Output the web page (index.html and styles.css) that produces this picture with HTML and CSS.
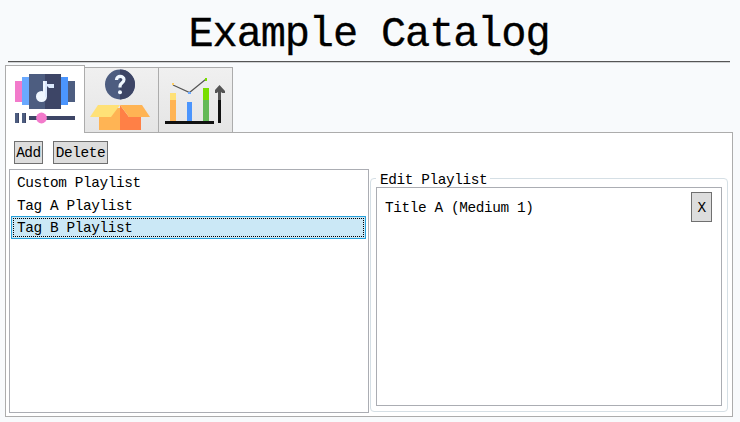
FILE: index.html
```html
<!DOCTYPE html>
<html lang="en">
<head>
<meta charset="utf-8">
<title>Example Catalog</title>
<link rel="stylesheet" href="styles.css">
</head>
<body>
<div class="window">
  <h1 class="title">Example Catalog</h1>
  <nav class="tabs">
    <div class="tab active">
      <svg width="60" height="50" viewBox="15 74 60 50" shape-rendering="crispEdges">
        <path fill="#f27acb" d="M15 81h7v21h-7z"/>
        <path fill="#6aa9ff" d="M22 77h7v28h-7z"/>
        <path fill="#4b95fd" d="M61 77h7v28h-7z"/>
        <path fill="#4d5d80" d="M68 81h7v21h-7zM29 74h16v35H29z"/>
        <path fill="#3d4566" d="M45 74h16v35H45z"/>
        <g shape-rendering="auto"><circle cx="41.5" cy="96.5" r="5.5" fill="#f0f7ff"/><path fill="#f0f7ff" d="M43 81h4v16h-4z"/><path fill="#dce9fd" d="M45 81h2v3h7v4h-5l-2-2v11h-2z"/></g>
        <path fill="#4d5d80" d="M15 113h3v10h-3zM22 113h3v10h-3z"/>
        <path fill="#3d4566" d="M18 113h1v10h-1zM25 113h1v10h-1zM29 116h46v4H29z"/>
        <circle cx="41.5" cy="118" r="5.4" fill="#f27acb" shape-rendering="auto"/>
      </svg>
    </div>
    <div class="tab">
      <svg width="62" height="62" viewBox="89 69 62 62">
        <circle cx="120" cy="84.500" r="15" fill="#4d5d80"/>
        <path fill="#3d4566" d="M120 69.500a15 15 0 0 1 0 30z"/>
        <path fill="none" stroke="#f0f7ff" stroke-width="3.200" d="M116.500 80c0-5 7.500-4.500 7.500-.5 0 3.500-4 3-4 7v1"/>
        <circle cx="120" cy="92.200" r="2" fill="#f0f7ff"/>
        <path fill="#ffb454" d="M99 108h21v22H99z"/>
        <path fill="#ff8046" d="M120 105l9 12h12v13h-21z"/>
        <path fill="#ffe177" d="M98 105h22l-9 12H90z"/>
        <path fill="#ffb454" d="M120 105h22l8 12h-21z"/>
      </svg>
    </div>
    <div class="tab">
      <svg width="62" height="50" viewBox="164 75 62 50">
        <g shape-rendering="crispEdges">
          <path fill="#ffe177" d="M170 93h6v7h-6z"/><path fill="#ffb454" d="M170 100h6v21h-6z"/>
          <path fill="#4b95fd" d="M187 102h5v19h-5z"/>
          <path fill="#78de00" d="M203 88h6v12h-6z"/><path fill="#63b957" d="M203 100h6v21h-6z"/>
          <path fill="#111" d="M165 121h49v3h-49zM218 100h3v23h-3z"/>
          <path fill="#555" d="M218 88h3v12h-3z"/>
        </g>
        <path fill="none" stroke="#555" stroke-width="1.200" d="M173 85l16.500 7.500 16-13"/>
        <path fill="#555" d="M219.500 85l5.500 6v2h-3l-2.500-3-2.500 3h-2v-3z"/>
        <path fill="#ffcf66" d="M172 83h2v2h-2z"/><path fill="#6aa9ff" d="M188 92h3v2h-3z"/><path fill="#78de00" d="M205 78h2v3h-2z"/>
      </svg>
    </div>
  </nav>
  <main class="panel">
    <div class="toolbar">
      <button class="btn">Add</button>
      <button class="btn">Delete</button>
    </div>
    <div class="columns">
      <ul class="playlists">
        <li>Custom Playlist</li>
        <li>Tag A Playlist</li>
        <li class="selected"><span class="focus">Tag B Playlist</span></li>
      </ul>
      <fieldset class="editor">
        <legend>Edit Playlist</legend>
        <div class="entries">
          <div class="entry"><span>Title A (Medium 1)</span><button class="btn remove">X</button></div>
        </div>
      </fieldset>
    </div>
  </main>
</div>
</body>
</html>
```

FILE: styles.css
```css
* { box-sizing: border-box; }
body {
  margin: 0;
  background: #f8fafc;
  color: #000;
  font: 14.4px/18px "Liberation Mono", monospace;
  letter-spacing: -0.39px;
}
.window {
  display: flex;
  flex-direction: column;
  height: 422px;
  padding: 0 7px 5px 5px;
}
.title {
  flex: none;
  height: 62px;
  margin: 0 3px 0 3px;
  padding: 9px 0 0;
  border-bottom: 1px solid #555;
  box-shadow: 0 1px #d0d2d4;
  font-size: 42px;
  line-height: 52px;
  font-weight: 400;
  letter-spacing: -1.14px;
  text-align: center;
  -webkit-text-stroke: 0.3px #000;
}
.tabs {
  display: flex;
  align-items: flex-end;
  height: 71px;
  flex: none;
}
.tab {
  display: flex;
  align-items: center;
  justify-content: center;
  width: 75px;
  height: 66px;
  border: 1px solid #acacac;
  background: linear-gradient(#f0f0f0, #e5e5e5);
}
.tab + .tab {
  justify-content: flex-start;
  margin-left: -1px;
  padding-left: 4px;
}
.tab + .tab + .tab { padding-left: 5px; }
.tab.active {
  position: relative;
  z-index: 1;
  width: 80px;
  height: 68px;
  padding-bottom: 2px;
  border-bottom: 0;
  background: #fff;
}
.panel {
  display: flex;
  flex: 1;
  flex-direction: column;
  min-height: 0;
  margin-top: -1px;
  padding: 8px 4px 3px 3px;
  border: 1px solid #acacac;
  background: #fff;
}
.toolbar {
  display: flex;
  gap: 10px;
  padding-left: 5px;
}
.btn {
  height: 23px;
  padding: 0 1px;
  border: 1px solid #707070;
  background: #ddd;
  color: #000;
  font: inherit;
  letter-spacing: inherit;
  white-space: nowrap;
}
.toolbar .btn:first-child { width: 29px; }
.toolbar .btn:last-child { width: 55px; }
.columns {
  display: flex;
  flex: 1;
  gap: 1px;
  min-height: 0;
  padding-top: 5px;
}
.playlists {
  width: 360px;
  margin: 0;
  padding: 1px 2px 1px 1px;
  border: 1px solid #abadb3;
  list-style: none;
}
.playlists li {
  height: 23px;
  padding: 3px 6px;
}
.playlists li + li { height: 22px; }
.playlists li.selected {
  height: 23px;
  padding: 1px;
  border: 1px solid #26a0da;
  background: #cbe8f6;
}
.focus {
  display: block;
  height: 19px;
  padding-left: 3px;
  border: 1px dotted #000;
  line-height: 18px;
}
.editor {
  flex: 1;
  min-width: 0;
  margin: 0 0 1px;
  padding: 0 5px 5px;
  border: 1px solid #d5dfe5;
  border-radius: 4px;
}
.editor legend {
  height: 18px;
  margin: 0;
  padding: 0 3px 0 4px;
  line-height: 22px;
}
.entries {
  height: 219px;
  padding: 4px 9px 4px 8px;
  border: 1px solid #abadb3;
}
.entry {
  display: flex;
  align-items: center;
  justify-content: space-between;
}
.entry span { padding-top: 2px; }
.remove { width: 21px; height: 30px; padding-top: 2px; }
```
